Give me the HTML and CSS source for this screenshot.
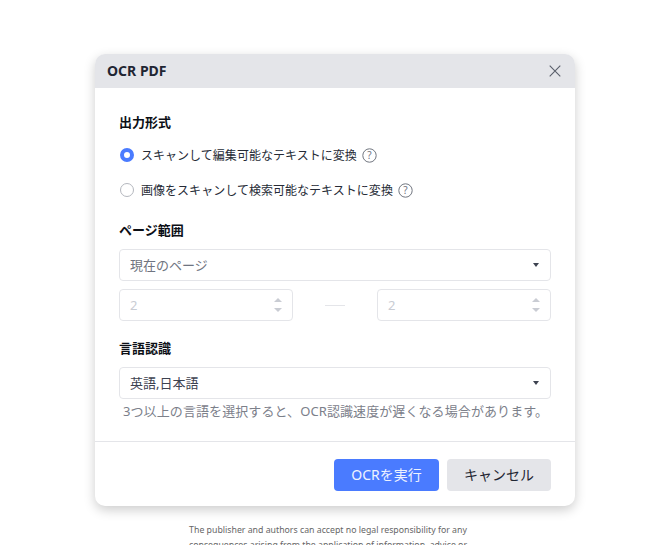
FILE: index.html
```html
<!DOCTYPE html>
<html lang="ja">
<head>
<meta charset="utf-8">
<title>OCR PDF</title>
<link rel="stylesheet" href="styles.css">
</head>
<body>
<div class="page-text">
  <p>The publisher and authors can accept no legal responsibility for any</p>
  <p>consequences arising from the application of information, advice or</p>
</div>
<div class="dialog">
  <header class="dialog-head">
    <span class="dialog-title">OCR PDF</span>
    <svg class="close" width="12" height="12" viewBox="0 0 12 12"><path d="M.7.7l10.6 10.6M11.3.7L.7 11.3" stroke="#5a5f6b" stroke-width="1.1" fill="none"/></svg>
  </header>
  <div class="dialog-body">
    <h3 class="label first">出力形式</h3>
    <div class="radio-row r1">
      <span class="radio on"></span>
      <span class="radio-text">スキャンして編集可能なテキストに変換</span>
      <svg class="help" width="15" height="15" viewBox="0 0 15 15"><circle cx="7.5" cy="7.5" r="6.7" fill="none" stroke="#70757f" stroke-width="1"/><text x="7.5" y="11" text-anchor="middle" class="help-q">?</text></svg>
    </div>
    <div class="radio-row r2">
      <span class="radio"></span>
      <span class="radio-text">画像をスキャンして検索可能なテキストに変換</span>
      <svg class="help" width="15" height="15" viewBox="0 0 15 15"><circle cx="7.5" cy="7.5" r="6.7" fill="none" stroke="#70757f" stroke-width="1"/><text x="7.5" y="11" text-anchor="middle" class="help-q">?</text></svg>
    </div>
    <h3 class="label l2">ページ範囲</h3>
    <div class="select">
      <span class="muted">現在のページ</span>
      <span class="caret"></span>
    </div>
    <div class="range">
      <div class="num"><span>2</span><span class="spin"><i class="up"></i><i class="down"></i></span></div>
      <span class="dash"></span>
      <div class="num"><span>2</span><span class="spin"><i class="up"></i><i class="down"></i></span></div>
    </div>
    <h3 class="label l3">言語認識</h3>
    <div class="select">
      <span class="value">英語,日本語</span>
      <span class="caret"></span>
    </div>
    <p class="hint">3つ以上の言語を選択すると、OCR認識速度が遅くなる場合があります。</p>
  </div>
  <footer class="dialog-foot">
    <button class="btn primary">OCRを実行</button>
    <button class="btn secondary">キャンセル</button>
  </footer>
</div>
</body>
</html>
```
FILE: styles.css
```css
* { box-sizing: border-box; }
html, body { margin: 0; height: 545px; overflow: hidden; background: #fff; }
body { font-family: "Noto Sans", "Noto Sans CJK JP", sans-serif; position: relative; }
.page-text { padding: 523px 14px 0 0; text-align: center; font-size: 8.75px; line-height: 15px; color: #666; }
.page-text p { margin: 0; white-space: nowrap; }
.dialog { position: absolute; left: 95px; top: 54px; width: 480px; height: 452px; background: #fff; border-radius: 10px; box-shadow: 0 4px 12px rgba(0,0,0,.2); overflow: hidden; display: flex; flex-direction: column; }
.dialog-head { height: 34px; flex: none; background: #e4e5e9; display: flex; align-items: center; justify-content: space-between; padding: 0 14px 2px 12px; }
.dialog-title { font-size: 14px; font-weight: 700; color: #1f2633; }
.close { margin-top: 2px; }
.dialog-body { flex: 1; padding: 0 24px; }
.label { margin: 0; font-size: 13px; line-height: 18px; font-weight: 700; color: #0c0f16; }
.label.first { padding-top: 25px; box-sizing: content-box; }
.label.l2 { margin-top: 21px; margin-bottom: 10px; }
.label.l3 { margin-top: 18px; margin-bottom: 10px; }
.radio-row { display: flex; align-items: center; height: 20px; font-size: 12px; color: #262b36; }
.r1 { margin-top: 14px; }
.r2 { margin-top: 15px; }
.radio-text { letter-spacing: .03px; }
.radio { width: 14px; height: 14px; border-radius: 50%; border: 1px solid #b4b7be; background: #fff; margin: 0 7px 0 1px; flex: none; }
.radio.on { border: 4px solid #4a7bff; }
.help { margin-left: 5px; flex: none; }
.help-q { font-size: 10px; fill: #70757f; font-family: "Noto Sans", sans-serif; }
.select { height: 32px; border: 1px solid #e4e5e9; border-radius: 4px; display: flex; align-items: center; justify-content: space-between; padding: 0 10px 2px; font-size: 13px; }
.muted { color: #6f7480; }
.value { color: #3d4250; }
.caret { width: 0; height: 0; border-left: 3.5px solid transparent; border-right: 3.5px solid transparent; border-top: 4px solid #3d4250; margin-top: 2px; margin-right: 1px; }
.range { display: flex; align-items: center; justify-content: space-between; margin-top: 8px; }
.num { width: 174px; height: 32px; border: 1px solid #e4e5e9; border-radius: 4px; display: flex; align-items: center; justify-content: space-between; padding: 0 10px; font-size: 13px; color: #c9ccd3; }
.dash { width: 20px; height: 1px; background: #e4e5e9; }
.spin { display: flex; flex-direction: column; gap: 6px; }
.spin i { display: block; width: 0; height: 0; border-left: 4px solid transparent; border-right: 4px solid transparent; }
.spin .up { border-bottom: 4px solid #c9ccd3; }
.spin .down { border-top: 4px solid #c9ccd3; }
.hint { margin: 3px 0 0; padding-left: 4px; font-size: 13px; letter-spacing: .09px; line-height: 19px; color: #7c808a; white-space: nowrap; }
.dialog-foot { height: 65px; flex: none; border-top: 1px solid #e4e5e9; display: flex; justify-content: flex-end; align-items: flex-start; gap: 8px; padding: 17px 24px 0; }
.btn { height: 32px; border: 0; border-radius: 4px; font-family: inherit; font-size: 14px; padding: 0 0 2px; }
.primary { width: 105px; background: #4a7bff; color: #eef2ff; }
.secondary { width: 104px; background: #e4e5e9; color: #1f2633; }
```
